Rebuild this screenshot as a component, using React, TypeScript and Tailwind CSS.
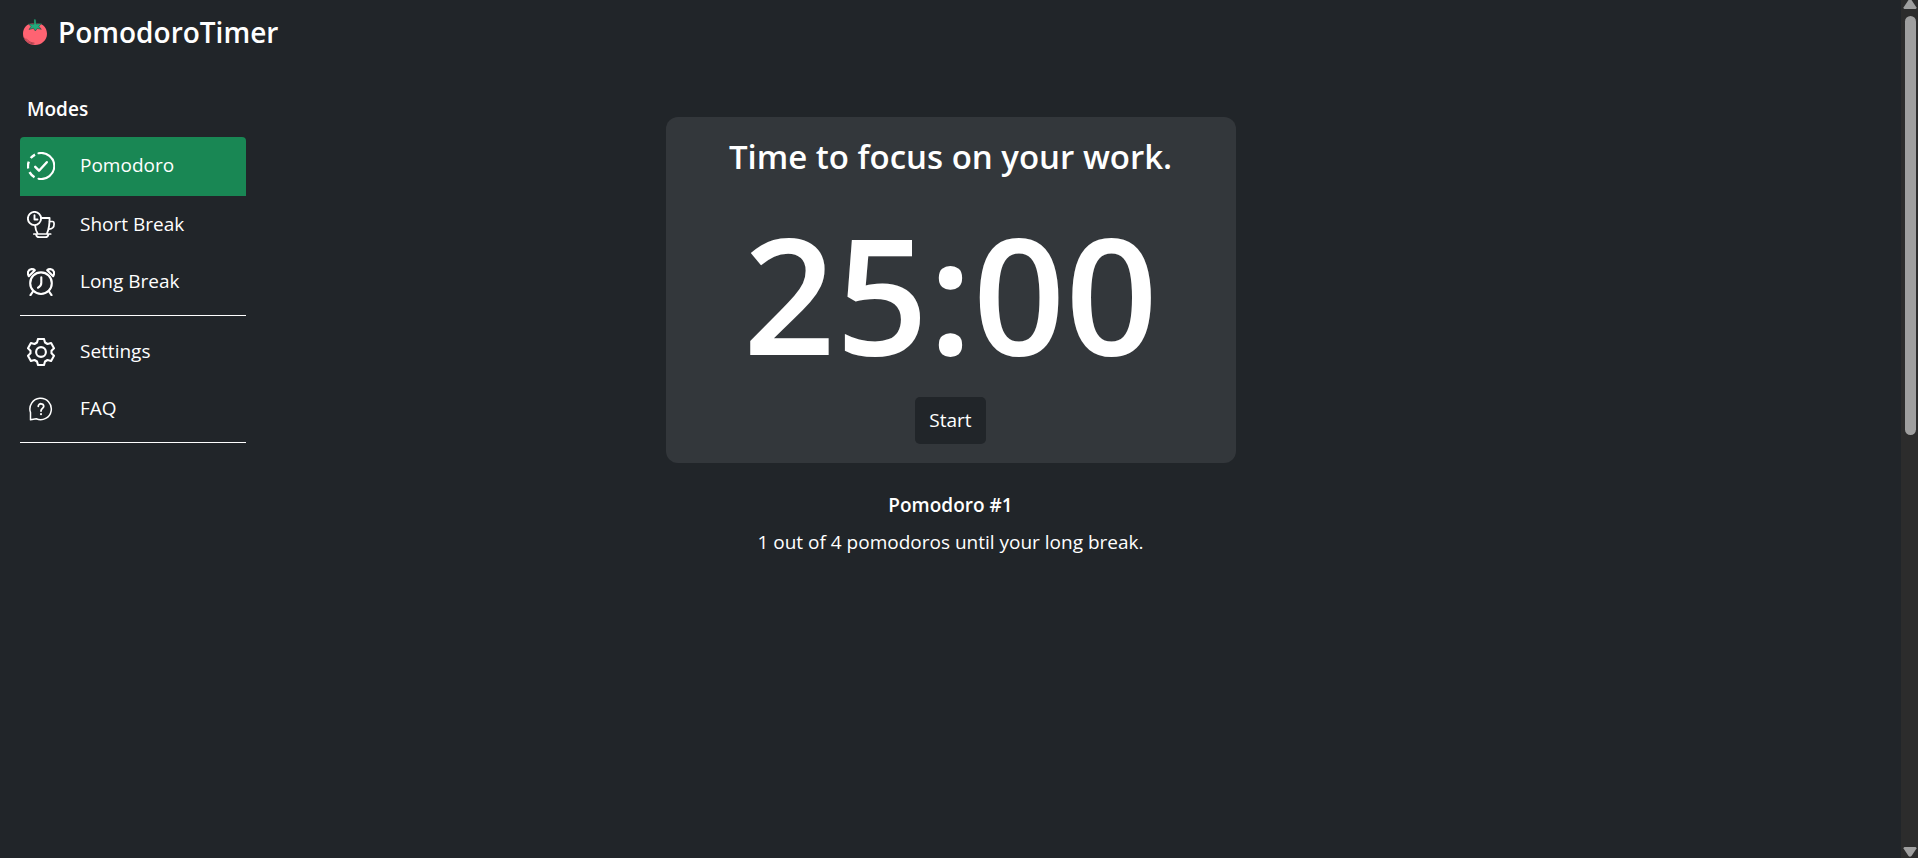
import type { ReactNode } from "react";

function TomatoIcon() {
  return (
    <svg viewBox="0 0 24 26" className="h-[26px] w-6" aria-hidden="true">
      <path d="M12 5C18.500 3 24 8 24 14.800C24 21.500 18.500 26 12 26S0 21.500 0 14.800C0 8 5.500 3 12 5Z" fill="#ff6372" />
      <path d="M1 18.500C2.500 22 6 24.500 10.500 25M3 19.500C5 22.300 8 24 11.500 24.200" fill="none" stroke="#8f3540" strokeWidth="0.7" />
      <path d="M11 0L12.800 0.600L13.200 5L19 4.200L15.800 7.300L18.300 10.300L14.200 9.500L12.300 12L10.500 9.300L6 10.500L8 7.500L5.500 4.800L11 5.200Z" fill="#22ab7c" stroke="#1d3a33" strokeWidth="0.5" />
    </svg>
  );
}

function Icon({ children, className = "size-7", viewBox = "0 0 28 28" }: { children: ReactNode; className?: string; viewBox?: string }) {
  return (
    <svg
      viewBox={viewBox}
      className={className}
      fill="none"
      stroke="currentColor"
      strokeWidth="2.1"
      strokeLinecap="round"
      strokeLinejoin="round"
      aria-hidden="true"
    >
      {children}
    </svg>
  );
}

function ProgressCheckIcon() {
  return (
    <Icon>
      <path d="M11.500 1.300A13 13 0 1 1 11.500 26.700" />
      <path d="M8 2.600A13 13 0 0 0 3.700 6.100M1.800 9.600A13 13 0 0 0 1.100 16.500M2.500 20.200A13 13 0 0 0 7.500 25.200" strokeLinecap="butt" strokeWidth="2.400" />
      <path d="M8.200 14.800L12 18.700L19.800 10.200" strokeWidth="2.400" />
    </Icon>
  );
}

function CupClockIcon() {
  return (
    <Icon>
      <circle cx="7.500" cy="7.500" r="6.600" strokeWidth="1.900" />
      <path d="M7.500 4.300V8.500H10.500" strokeWidth="1.900" />
      <path d="M14.500 7H22.600C22.600 13 22 18 20 22.300M8.200 14.800C8.500 18 9 20 10.500 22.300" strokeWidth="1.800" />
      <path d="M22.600 10.500H25.500C26.700 10.500 27.100 11.500 27.100 13C27.100 16.500 25.500 18 21.800 18.200" strokeWidth="1.700" />
      <path d="M6.800 23H23.700M9 23.500C9.500 25.700 10.500 26.200 12 26.200H18.500C20 26.200 21 25.700 21.500 23.500" strokeWidth="1.700" />
    </Icon>
  );
}

function AlarmIcon() {
  return (
    <Icon>
      <circle cx="14" cy="15.200" r="10.800" />
      <path d="M14.300 9.300V14.800C14.300 17 13 18.800 11 19.700" />
      <path d="M6.300 23L3.500 27.200M21.700 23L24.500 27.200" />
      <path d="M1.800 8.200C0 5 1 1.500 4.500 1.100C6 1 7.200 1.500 7.800 2.200ZM26.200 8.200C28 5 27 1.500 23.500 1.100C22 1 20.800 1.500 20.200 2.200Z" />
    </Icon>
  );
}

function GearIcon() {
  return (
    <Icon>
      <circle cx="14" cy="14" r="4.900" />
      <path d="M11 1H17L18 4.500L20.500 6L24.100 5.100L27 10.300L24.500 12.800V15.300L27 17.800L24.100 22.900L20.500 22L18 23.500L17 27H11L10 23.500L7.500 22L3.900 22.900L1 17.800L3.500 15.300V12.800L1 10.300L3.900 5.100L7.500 6L10 4.500Z" />
    </Icon>
  );
}

function QuestionIcon() {
  return (
    <Icon className="mx-0.5 size-6" viewBox="0 0 24 24">
      <path d="M1.500 22.800V15.500A10.700 10.700 0 1 1 7.300 21.800Z" strokeWidth="1.500" />
      <path d="M9.300 9.300C9.300 5.800 15 6 14.700 9.500C14.500 11.500 12 11.500 12 14" strokeWidth="1.800" />
      <path d="M12 17V17.300" strokeWidth="2" />
    </Icon>
  );
}

function NavItem({ icon, label, active = false }: { icon: ReactNode; label: string; active?: boolean }) {
  return (
    <li>
      <button
        type="button"
        aria-pressed={active}
        className={
          active
            ? "flex h-[59px] w-full items-center gap-[25px] rounded-t bg-[#198754] px-[7px] pb-0.5 text-left"
            : "flex h-[57px] w-full items-center gap-[25px] px-[7px] text-left"
        }
      >
        {icon}
        <span>{label}</span>
      </button>
    </li>
  );
}

function ScrollRail() {
  return (
    <div className="fixed inset-y-0 right-0 flex w-[17px] flex-col items-center bg-[#2c2c2c] pl-px" aria-hidden="true">
      <svg viewBox="0 0 14 16" className="h-4 w-3.5">
        <path d="M5.500 0H8.500L13.500 7.500Q13.500 9 12.500 9H1.500Q0.500 9 0.500 7.500Z" fill="#9f9f9f" />
      </svg>
      <div className="w-[11px] basis-[419px] rounded-full bg-[#9f9f9f]" />
      <svg viewBox="0 0 14 11" className="mt-auto h-[11px] w-3.5">
        <path d="M1.500 0H12.500Q13.500 0 13.500 1.500L8.500 9Q7 10.500 5.500 9L0.500 1.500Q0.500 0 1.500 0Z" fill="#9f9f9f" />
      </svg>
    </div>
  );
}

export default function App() {
  return (
    <div className="flex min-h-screen flex-col bg-[#212529] pr-[17px] font-['Open_Sans',sans-serif] text-[19px] text-white">
      <header className="flex items-center gap-[11px] px-[23px] pt-2.5">
        <TomatoIcon />
        <h1 className="text-[28px] leading-[44px] font-semibold">PomodoroTimer</h1>
      </header>
      <div className="grid grow grid-cols-[1fr_570px_1fr] items-start">
        <nav className="ml-5 w-[226px] pt-10" aria-label="Modes">
          <h2 className="px-[7px] pb-3 leading-[31px] font-semibold">Modes</h2>
          <ul className="border-b border-white pb-[5px]">
            <NavItem icon={<ProgressCheckIcon />} label="Pomodoro" active />
            <NavItem icon={<CupClockIcon />} label="Short Break" />
            <NavItem icon={<AlarmIcon />} label="Long Break" />
          </ul>
          <ul className="border-b border-white pt-[7px] pb-[5px]">
            <NavItem icon={<GearIcon />} label="Settings" />
            <NavItem icon={<QuestionIcon />} label="FAQ" />
          </ul>
        </nav>
        <main className="pt-[63px] text-center">
          <section className="flex flex-col items-center rounded-xl bg-[#33373b] px-5 pt-5 pb-[19px]">
            <h2 className="text-[33px] leading-10 font-semibold">Time to focus on your work.</h2>
            <p className="pt-[25px] pb-[15px] text-[162px] leading-[180px] font-semibold" role="timer">25:00</p>
            <button type="button" className="h-[47px] rounded-[5px] bg-[#212529] px-3.5">
              Start
            </button>
          </section>
          <p className="pt-7 leading-7 font-semibold">Pomodoro #1</p>
          <p className="pt-[9px] leading-7">1 out of 4 pomodoros until your long break.</p>
        </main>
      </div>
      <ScrollRail />
    </div>
  );
}
